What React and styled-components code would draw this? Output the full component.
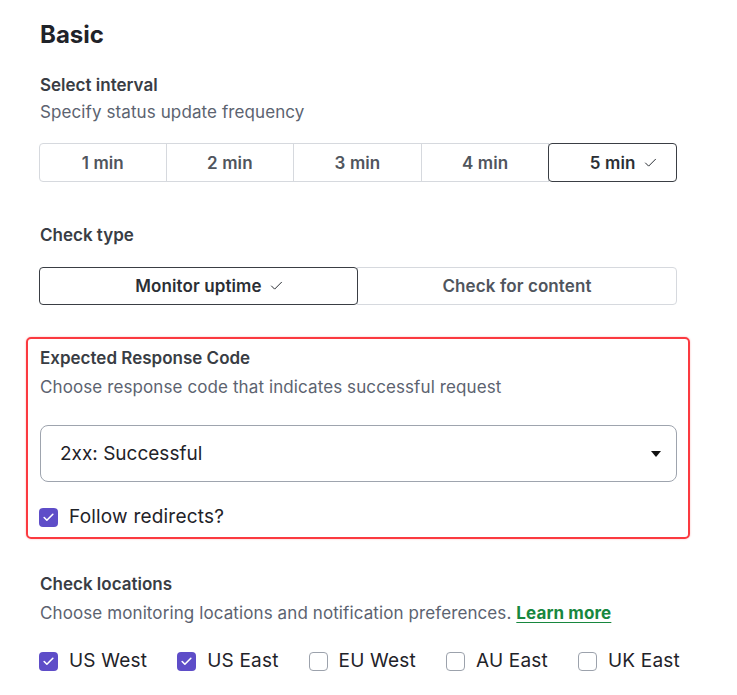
import React from 'react';
import styled, { createGlobalStyle } from 'styled-components';

const GlobalStyle = createGlobalStyle`
  body {
    margin: 0;
    background: #ffffff;
    font-family: Inter, 'Noto Sans', 'Liberation Sans', sans-serif;
    color: #1f2329;
  }
`;

const Page = styled.div`
  width: 638px;
  padding: 21px 0 0 39px;
`;

const Heading = styled.h2`
  margin: 0 0 24px 1px;
  font-size: 24px;
  line-height: 28px;
  font-weight: 700;
  color: #1f2329;
`;

const Field = styled.div`
  display: flex;
  flex-direction: column;
  margin-bottom: ${(p) => p.$gap || 0}px;
`;

const Label = styled.div`
  margin: ${(p) => p.$top || 0}px 0 0 1px;
  font-size: 17px;
  line-height: 24px;
  font-weight: 600;
  color: #393d44;
`;

const Hint = styled.div`
  margin: ${(p) => p.$top || 3}px 0 0 1px;
  font-size: 17px;
  line-height: 24px;
  letter-spacing: 0.1px;
  color: #5c6370;
`;

const LearnMore = styled.a`
  color: #17873e;
  font-weight: 700;
  text-decoration: underline;
  text-underline-offset: 3px;
`;

const Segments = styled.div`
  display: grid;
  grid-template-columns: repeat(${(p) => p.$count}, 1fr);
  margin-top: ${(p) => p.$top}px;
  height: ${(p) => p.$height}px;
`;

const Segment = styled.button`
  display: flex;
  align-items: center;
  justify-content: center;
  margin: 0 0 0 -1px;
  padding: 0;
  border: 1px solid ${(p) => (p.$active ? '#3a3e44' : '#d6d9de')};
  border-radius: ${(p) => (p.$active ? '4px' : '0')};
  position: relative;
  z-index: ${(p) => (p.$active ? 1 : 0)};
  background: #ffffff;
  font-family: inherit;
  font-size: 17px;
  font-weight: 600;
  letter-spacing: 0.1px;
  color: ${(p) => (p.$active ? '#2b2f35' : '#50555d')};
  cursor: pointer;

  &:first-child {
    margin-left: 0;
    border-top-left-radius: 4px;
    border-bottom-left-radius: 4px;
  }

  &:last-child {
    border-top-right-radius: 4px;
    border-bottom-right-radius: 4px;
  }
`;

const SegmentText = styled.span`
  position: relative;
`;

const SegmentTick = styled.span`
  position: absolute;
  left: calc(100% + 7px);
  top: 50%;
  display: flex;
  transform: translateY(-50%);
`;

const Highlight = styled.div`
  margin: 32px -13px 0;
  padding: 7px 11px 8px;
  border: 2px solid #fb3a40;
  border-radius: 5px;
  box-shadow: 0 0 2px rgba(251, 58, 64, 0.4);
`;

const SelectBox = styled.div`
  display: flex;
  align-items: center;
  justify-content: space-between;
  box-sizing: border-box;
  height: 57px;
  margin: 26px 0 0 1px;
  padding: 0 15px 0 19px;
  border: 1px solid #9ea4ae;
  border-radius: 8px;
  font-size: 19px;
  color: #1f2329;
`;

const Caret = styled.span`
  width: 0;
  height: 0;
  border-left: 5px solid transparent;
  border-right: 5px solid transparent;
  border-top: 6px solid #111111;
`;

const CheckRow = styled.div`
  display: flex;
  align-items: center;
  gap: 30px;
  margin-top: ${(p) => p.$top}px;
  white-space: nowrap;
`;

const CheckItem = styled.label`
  display: flex;
  flex-shrink: 0;
  align-items: center;
  gap: 11px;
  font-size: 19px;
  line-height: 24px;
  letter-spacing: 0.2px;
  color: #1f2329;
`;

const Box = styled.span`
  display: flex;
  align-items: center;
  justify-content: center;
  box-sizing: border-box;
  width: 19px;
  height: 19px;
  border-radius: 4px;
  background: ${(p) => (p.$checked ? '#5e4dc8' : '#ffffff')};
  border: ${(p) => (p.$checked ? 'none' : '1.5px solid #9ca2ac')};
`;

const Tick = ({ size = 14, color = 'currentColor', width = 1.6 }) => (
  <svg width={size} height={size} viewBox="0 0 24 24" fill="none" stroke={color} strokeWidth={width} strokeLinecap="round" strokeLinejoin="round">
    <path d="M20 6 9 17l-5-5" />
  </svg>
);

const Checkbox = ({ checked, children }) => (
  <CheckItem>
    <Box $checked={checked}>{checked && <Tick size={13} color="#ffffff" width={3} />}</Box>
    {children}
  </CheckItem>
);

const Option = ({ active, children }) => (
  <Segment $active={active}>
    <SegmentText>
      {children}
      {active && (
        <SegmentTick>
          <Tick size={15} width={1.6} />
        </SegmentTick>
      )}
    </SegmentText>
  </Segment>
);

const intervals = ['1 min', '2 min', '3 min', '4 min', '5 min'];
const locations = [
  { name: 'US West', checked: true },
  { name: 'US East', checked: true },
  { name: 'EU West', checked: false },
  { name: 'AU East', checked: false },
  { name: 'UK East', checked: false },
];

export default function App() {
  return (
    <>
      <GlobalStyle />
      <Page>
        <Heading>Basic</Heading>

        <Field $gap={41}>
          <Label>Select interval</Label>
          <Hint>Specify status update frequency</Hint>
          <Segments $count={5} $top={19} $height={39}>
            {intervals.map((item) => (
              <Option key={item} active={item === '5 min'}>
                {item}
              </Option>
            ))}
          </Segments>
        </Field>

        <Field>
          <Label>Check type</Label>
          <Segments $count={2} $top={20} $height={38}>
            <Option active>Monitor uptime</Option>
            <Option>Check for content</Option>
          </Segments>
        </Field>

        <Highlight>
          <Label>Expected Response Code</Label>
          <Hint $top={5}>Choose response code that indicates successful request</Hint>
          <SelectBox>
            2xx: Successful
            <Caret />
          </SelectBox>
          <CheckRow $top={23}>
            <Checkbox checked>Follow redirects?</Checkbox>
          </CheckRow>
        </Highlight>

        <Field>
          <Label $top={33}>Check locations</Label>
          <Hint $top={5}>
            Choose monitoring locations and notification preferences. <LearnMore>Learn more</LearnMore>
          </Hint>
          <CheckRow $top={24}>
            {locations.map((loc) => (
              <Checkbox key={loc.name} checked={loc.checked}>
                {loc.name}
              </Checkbox>
            ))}
          </CheckRow>
        </Field>
      </Page>
    </>
  );
}
